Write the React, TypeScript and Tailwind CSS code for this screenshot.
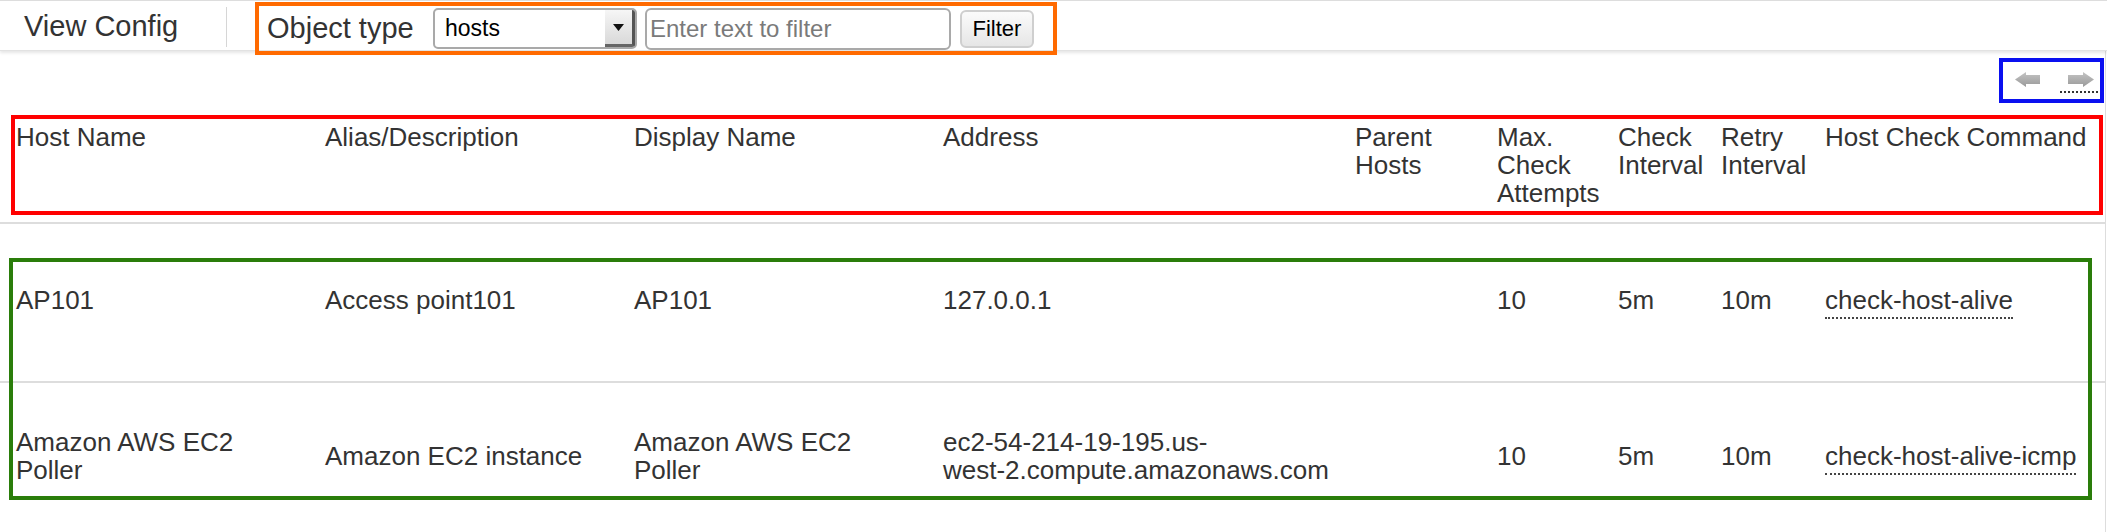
import React from "react";

const gridCols =
  "grid grid-cols-[309px_309px_309px_412px_142px_121px_103px_104px_1fr]";

function LeftArrow() {
  return (
    <svg width="25" height="15" viewBox="0 0 25 15">
      <defs>
        <linearGradient id="ga" x1="0" y1="0" x2="0" y2="1">
          <stop offset="0" stopColor="#c4c4c4" />
          <stop offset="1" stopColor="#999999" />
        </linearGradient>
      </defs>
      <polygon points="0,7.5 11,0 11,3 25,3 25,12 11,12 11,15" fill="url(#ga)" />
    </svg>
  );
}

function RightArrow() {
  return (
    <svg width="26" height="15" viewBox="0 0 26 15">
      <defs>
        <linearGradient id="gb" x1="0" y1="0" x2="0" y2="1">
          <stop offset="0" stopColor="#c4c4c4" />
          <stop offset="1" stopColor="#999999" />
        </linearGradient>
      </defs>
      <polygon points="26,7.5 15,0 15,3 0,3 0,12 15,12 15,15" fill="url(#gb)" />
    </svg>
  );
}

const headers = [
  "Host Name",
  "Alias/Description",
  "Display Name",
  "Address",
  "Parent Hosts",
  "Max. Check Attempts",
  "Check Interval",
  "Retry Interval",
  "Host Check Command",
];

type Row = { h: string; cells: React.ReactNode[]; cmd: string };

const rows: Row[] = [
  {
    h: "h-[159px] border-b-2 border-[#dddddd] pb-[5px]",
    cells: [
      "AP101",
      "Access point101",
      "AP101",
      "127.0.0.1",
      "",
      "10",
      "5m",
      "10m",
    ],
    cmd: "check-host-alive",
  },
  {
    h: "h-[146px]",
    cells: [
      "Amazon AWS EC2 Poller",
      "Amazon EC2 instance",
      "Amazon AWS EC2 Poller",
      <>
        ec2-54-214-19-195.us-
        <span className="whitespace-nowrap">west-2.compute.amazonaws.com</span>
      </>,
      "",
      "10",
      "5m",
      "10m",
    ],
    cmd: "check-host-alive-icmp",
  },
];

function cellPad(i: number) {
  return i < 3 ? "pl-2 pr-[26px]" : "pl-2 pr-[4px]";
}

export default function App() {
  return (
    <div className="relative w-[2107px] h-[532px] overflow-hidden bg-white font-['Liberation_Sans',Arial,sans-serif] text-[#333333]">
      {/* Toolbar */}
      <div className="relative z-10 flex items-start h-[51px] border-t border-b border-t-[#dddddd] border-b-[#e2e2e2] bg-white shadow-[0_2px_3px_rgba(0,0,0,0.10)]">
        <div className="w-[226px] h-[50px] pl-[24px] flex items-center text-[29px] leading-none">
          View Config
        </div>
        <div className="w-px h-[40px] mt-[6px] bg-[#d6d6d6]" />
        <div className="ml-[28px] mt-[1px] w-[802px] h-[53px] border-4 border-[#ff6a00] flex items-center pl-[8px]">
          <div className="w-[166px] text-[29px] leading-none">Object type</div>
          <div className="w-[204px] h-[41px] rounded-[5px] border-2 border-[#a9a9a9] bg-white flex items-stretch overflow-hidden">
            <div className="flex-1 flex items-center pl-[10px] text-[23px] text-black">
              hosts
            </div>
            <div className="w-[30px] bg-gradient-to-b from-[#f6f6f6] to-[#d9d9d9] border-r-[3px] border-b-[3px] border-r-[#555555] border-b-[#666666] flex items-center justify-center">
              <svg width="11" height="7" viewBox="0 0 11 7">
                <polygon points="0,0 11,0 5.5,7" fill="#111111" />
              </svg>
            </div>
          </div>
          <input
            className="ml-[8px] w-[306px] h-[42px] rounded-[6px] border-2 border-[#a9a9a9] pl-[3px] text-[24px] text-black placeholder:text-[#7a7a7a] outline-none font-['Liberation_Sans',Arial,sans-serif]"
            placeholder="Enter text to filter"
          />
          <button className="ml-[9px] w-[74px] h-[38px] rounded-[6px] border-2 border-[#cfcfcf] bg-gradient-to-b from-[#fbfbfb] to-[#e6e6e6] text-[22px] text-black flex items-center justify-center">
            Filter
          </button>
        </div>
      </div>

      {/* Content */}
      <div className="w-[2106px] h-[481px] border-r border-[#dddddd]">
        {/* Pager */}
        <div className="flex justify-end pt-[7px] pr-[1px]">
          <div className="w-[105px] h-[45px] border-4 border-[#0a10f0] flex items-start pl-[12px] pt-[10px]">
            <LeftArrow />
            <span className="ml-[20px] pl-[8px] pr-[4px] pb-[4px] border-b-2 border-dotted border-[#333333] flex">
              <RightArrow />
            </span>
          </div>
        </div>

        {/* Header */}
        <div className={`${gridCols} h-[121px] pl-[8px] pt-[20px] border-b-2 border-[#dddddd] text-[26px] leading-[28px]`}>
          {headers.map((h, i) => (
            <div key={h} className={cellPad(i)}>
              {h}
            </div>
          ))}
        </div>

        {/* Rows */}
        {rows.map((r, ri) => (
          <div
            key={ri}
            className={`${gridCols} ${r.h} pl-[8px] items-center text-[26px] leading-[28px]`}
          >
            {r.cells.map((c, i) => (
              <div key={i} className={cellPad(i)}>
                {c}
              </div>
            ))}
            <div className="pl-2 pr-[4px]">
              <span className="border-b-2 border-dotted border-[#444444] pb-[2px]">
                {r.cmd}
              </span>
            </div>
          </div>
        ))}
      </div>

      {/* Annotation overlays */}
      <div className="pointer-events-none absolute left-[11px] top-[115px] w-[2092px] h-[100px] border-4 border-[#ff0000]" />
      <div className="pointer-events-none absolute left-[9px] top-[258px] w-[2083px] h-[242px] border-4 border-[#2a7d0a]" />
    </div>
  );
}
